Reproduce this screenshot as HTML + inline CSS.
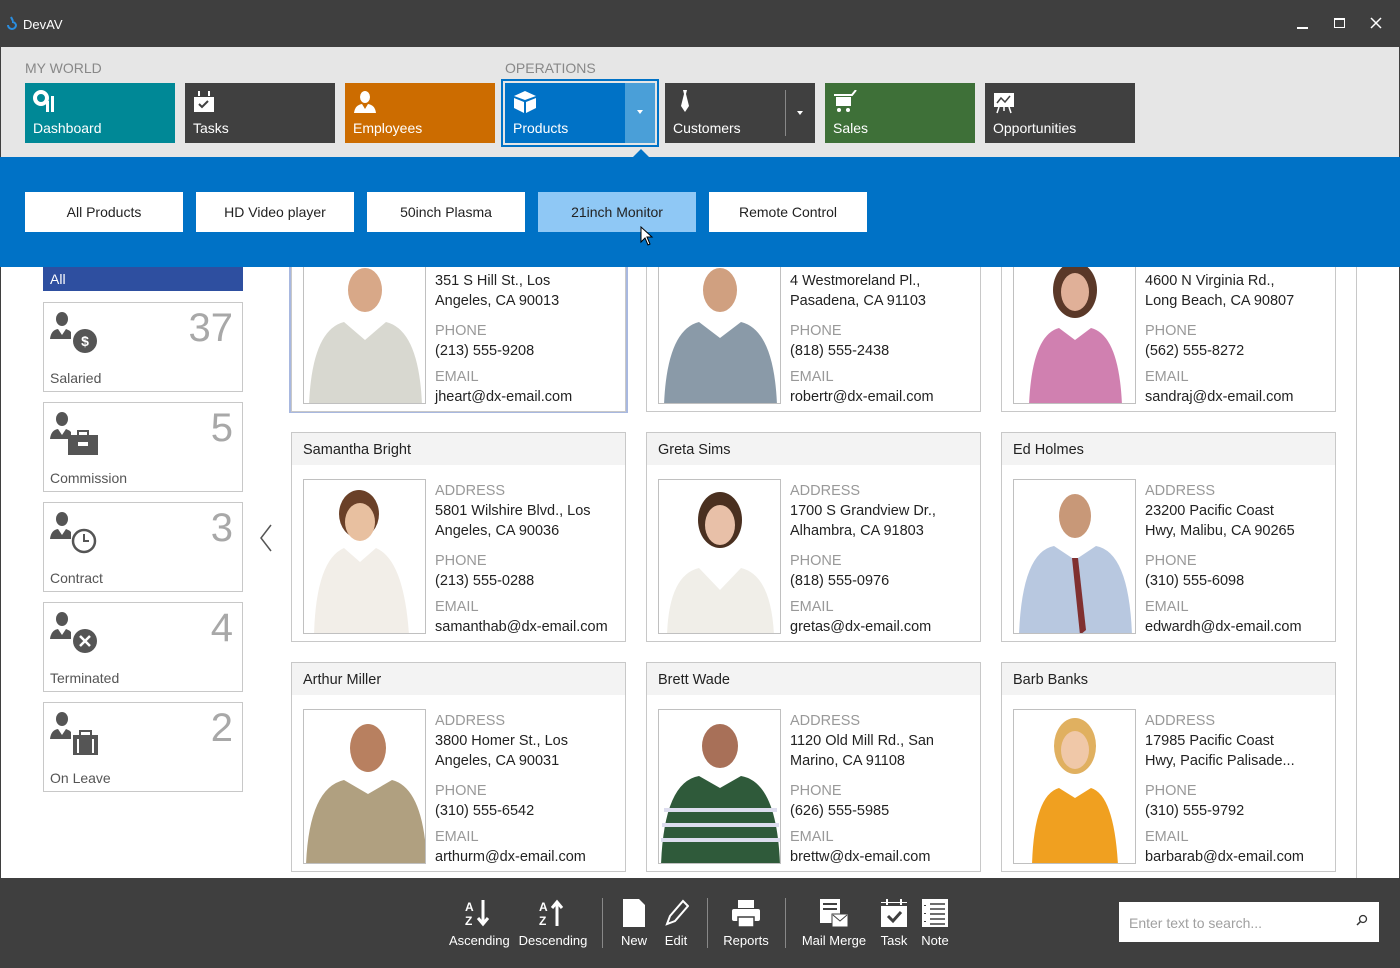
<!DOCTYPE html>
<html><head><meta charset="utf-8"><style>
*{box-sizing:border-box;margin:0;padding:0}
body{width:1400px;height:968px;overflow:hidden;background:#fff;font-family:"Liberation Sans",sans-serif;position:relative}
.a{position:absolute}
.tile{position:absolute;top:83px;height:60px;width:150px;color:#fff;font-size:14px}
.tile .l{position:absolute;left:8px;top:37px}
.tile svg{position:absolute;left:8px;top:7px}
.sub{position:absolute;top:192px;height:40px;width:158px;background:#fff;color:#222;font-size:14px;text-align:center;line-height:41px}
.side{position:absolute;left:43px;width:200px;height:90px;border:1px solid #c8c8c8;background:#fff}
.side .n{position:absolute;right:9px;top:3px;font-size:40px;color:#a8a8a8}
.side .t{position:absolute;left:6px;top:67px;font-size:14px;color:#555}
.side svg{position:absolute;left:5px;top:8px}
.card{position:absolute;width:335px;height:210px;border:1px solid #c8c8c8;background:#fff}
.card .h{height:32px;background:#f3f3f3;padding-left:11px;line-height:34px;font-size:14.5px;color:#222}
.card .p{position:absolute;left:11px;top:46px;width:123px;height:155px;border:1px solid #c0c0c0;overflow:hidden;background:#fff}
.card .i{position:absolute;left:143px;top:48px;font-size:14.5px;line-height:20px;color:#222}
.card .i .g{color:#999}
.card .i .s{height:10px}
.bt{position:absolute;top:898px;color:#fff;font-size:13px;text-align:center}
.bt svg{display:block;margin:0 auto 5px}
.sep{position:absolute;top:898px;width:1px;height:50px;background:#888}
</style></head><body>
<div class="a" style="left:0;top:0;width:1400px;height:47px;background:#3f3f3f"></div>
<svg class="a" style="left:4px;top:16px" width="14" height="16"><path d="M7 1 L9 5 M4 9 a4 4 0 1 0 8 0 a4 4 0 0 0 -4 -3" stroke="#2a8ee0" stroke-width="2" fill="none"/></svg>
<div class="a" style="left:23px;top:17px;color:#fff;font-size:13px">DevAV</div>
<div class="a" style="left:1297px;top:27px;width:11px;height:1.5px;background:#fff"></div>
<div class="a" style="left:1334px;top:18px;width:11px;height:10px;border:1.5px solid #fff;border-top-width:2.5px"></div>
<svg class="a" style="left:1370px;top:17px" width="12" height="12"><path d="M1 1L11 11M11 1L1 11" stroke="#fff" stroke-width="1.5"/></svg>
<div class="a" style="left:0;top:47px;width:1400px;height:110px;background:#e6e6e6;border-left:1px solid #3f3f3f;border-right:1px solid #3f3f3f"></div>
<div class="a" style="left:25px;top:60px;font-size:14px;color:#888">MY WORLD</div>
<div class="a" style="left:505px;top:60px;font-size:14px;color:#888">OPERATIONS</div>
<div class="tile" style="left:25px;background:#008896"><svg width="26" height="24"><circle cx="8" cy="8" r="6" fill="none" stroke="#fff" stroke-width="4"/><rect x="13" y="11" width="3" height="11" fill="#fff"/><rect x="18" y="6" width="3" height="16" fill="#fff"/></svg><span class="l">Dashboard</span></div>
<div class="tile" style="left:185px;background:#404040"><svg width="24" height="24"><rect x="1" y="4" width="20" height="18" fill="#fff"/><rect x="1" y="4" width="20" height="3" fill="#404040"/><path d="M6 14l3 3 6-6" stroke="#404040" stroke-width="2" fill="none"/><rect x="5" y="1" width="2" height="5" fill="#fff"/><rect x="15" y="1" width="2" height="5" fill="#fff"/></svg><span class="l">Tasks</span></div>
<div class="tile" style="left:345px;background:#cc6c00"><svg width="24" height="24"><ellipse cx="12" cy="7" rx="5" ry="6" fill="#fff"/><path d="M1 23 Q2 15 9 14 L12 19 L15 14 Q22 15 23 23Z" fill="#fff"/></svg><span class="l">Employees</span></div>
<div class="a" style="left:501px;top:79px;width:158px;height:68px;border:2px solid #0072c6"></div>
<div class="tile" style="left:505px;width:150px;background:#0072c6"><svg width="24" height="24"><path d="M12 1L23 6L12 10L1 6Z M1 8L11 12V23L1 18Z M13 12L23 8V18L13 23Z" fill="#fff"/></svg><span class="l">Products</span><div class="a" style="left:120px;top:0;width:30px;height:60px;background:#4a9fd8"></div><div class="a" style="left:132px;top:27px;border:3px solid transparent;border-top:4px solid #fff"></div></div>
<div class="tile" style="left:665px;background:#404040"><svg width="24" height="24"><path d="M10 0h4l-1 4 3 12-4 6-4-6 3-12z" fill="#fff"/></svg><span class="l">Customers</span><div class="a" style="left:120px;top:7px;width:1px;height:46px;background:#888"></div><div class="a" style="left:132px;top:28px;border:3px solid transparent;border-top:4px solid #fff"></div></div>
<div class="tile" style="left:825px;background:#3e7038"><svg width="26" height="24"><path d="M1 5h18l4-5" stroke="#fff" stroke-width="2" fill="none"/><rect x="3" y="7" width="15" height="9" fill="#fff"/><circle cx="6" cy="20" r="2" fill="#fff"/><circle cx="15" cy="20" r="2" fill="#fff"/></svg><span class="l">Sales</span></div>
<div class="tile" style="left:985px;background:#404040"><svg width="24" height="24"><rect x="1" y="3" width="20" height="14" fill="#fff"/><path d="M4 13l4-5 4 4 5-6" stroke="#404040" stroke-width="1.5" fill="none"/><path d="M6 17l-2 6M16 17l2 6M11 17v4" stroke="#fff" stroke-width="1.5"/></svg><span class="l">Opportunities</span></div>
<div class="a" style="left:633px;top:149px;border:8px solid transparent;border-bottom:8px solid #0072c6;border-top:0"></div>
<div class="a" style="left:0;top:157px;width:1400px;height:110px;background:#0072c6"></div>
<div class="sub" style="left:25px">All Products</div>
<div class="sub" style="left:196px">HD Video player</div>
<div class="sub" style="left:367px">50inch Plasma</div>
<div class="sub" style="left:538px;background:#8fc8f5">21inch Monitor</div>
<div class="sub" style="left:709px">Remote Control</div>
<svg class="a" style="left:640px;top:226px" width="14" height="20"><path d="M1 1V16L5 12L8 19L10 18L7 11H12Z" fill="#fff" stroke="#000" stroke-width="1"/></svg>
<div class="a" style="left:0;top:267px;width:1px;height:611px;background:#3f3f3f"></div>
<div class="a" style="left:1399px;top:267px;width:1px;height:611px;background:#3f3f3f"></div>
<div class="a" style="left:43px;top:267px;width:200px;height:24px;background:#2e4fa0;color:#fff;font-size:14px;padding:4px 7px">All</div>
<div class="side" style="top:302px"><svg width="52" height="46"><ellipse cx="13" cy="8" rx="6" ry="7" fill="#555"/><path d="M1 28Q2 19 9 18L13 24L17 18Q20 19 22 21V28Z" fill="#555"/><circle cx="36" cy="30" r="12" fill="#555"/><text x="36" y="35" fill="#fff" font-size="14" font-weight="bold" text-anchor="middle" font-family="Liberation Sans">$</text></svg><span class="n">37</span><span class="t">Salaried</span></div>
<div class="side" style="top:402px"><svg width="52" height="46"><ellipse cx="13" cy="8" rx="6" ry="7" fill="#555"/><path d="M1 28Q2 19 9 18L13 24L17 18Q20 19 22 21V28Z" fill="#555"/><rect x="19" y="24" width="30" height="20" fill="#555"/><rect x="29" y="20" width="10" height="5" fill="none" stroke="#555" stroke-width="2"/><rect x="29" y="31" width="10" height="4" fill="#fff"/></svg><span class="n">5</span><span class="t">Commission</span></div>
<div class="side" style="top:502px"><svg width="52" height="46"><ellipse cx="13" cy="8" rx="6" ry="7" fill="#555"/><path d="M1 28Q2 19 9 18L13 24L17 18Q20 19 22 21V28Z" fill="#555"/><circle cx="35" cy="30" r="11" fill="#fff" stroke="#555" stroke-width="2.5"/><path d="M35 23v7h5" stroke="#555" stroke-width="2" fill="none"/></svg><span class="n">3</span><span class="t">Contract</span></div>
<div class="side" style="top:602px"><svg width="52" height="46"><ellipse cx="13" cy="8" rx="6" ry="7" fill="#555"/><path d="M1 28Q2 19 9 18L13 24L17 18Q20 19 22 21V28Z" fill="#555"/><circle cx="36" cy="30" r="12" fill="#555"/><path d="M31 25l10 10M41 25l-10 10" stroke="#fff" stroke-width="2.5"/></svg><span class="n">4</span><span class="t">Terminated</span></div>
<div class="side" style="top:702px"><svg width="52" height="46"><ellipse cx="13" cy="8" rx="6" ry="7" fill="#555"/><path d="M1 28Q2 19 9 18L13 24L17 18Q20 19 22 21V28Z" fill="#555"/><rect x="24" y="24" width="25" height="20" fill="#555"/><rect x="31" y="20" width="11" height="5" fill="none" stroke="#555" stroke-width="2"/><rect x="28" y="28" width="2" height="14" fill="#fff"/><rect x="43" y="28" width="2" height="14" fill="#fff"/></svg><span class="n">2</span><span class="t">On Leave</span></div>
<svg class="a" style="left:259px;top:524px" width="14" height="28"><path d="M12 1L2 14L12 27" stroke="#555" stroke-width="1.5" fill="none"/></svg>

<div class="a" style="left:250px;top:267px;width:1150px;height:611px;overflow:hidden">
<div class="a" style="left:39px;top:-5px;width:339px;height:151px;border:2px solid #a8b8e0"></div>
<div class="a" style="left:1106px;top:0;width:1px;height:611px;background:#c8c8c8"></div>
<div class="card" style="left:41px;top:-65px"><div class="h">John Heart</div><div class="p"><svg width="123" height="155"><ellipse cx="61" cy="40" rx="17" ry="22" fill="#d8a888"/><path d="M5 155Q8 80 40 72L61 90L82 72Q115 80 118 155Z" fill="#d8d8d0"/></svg></div><div class="i"><div class="g">ADDRESS</div>351 S Hill St., Los<br>Angeles, CA 90013<div class="s"></div><div class="g">PHONE</div>(213) 555-9208<div class="s" style="height:6px"></div><div class="g">EMAIL</div>jheart@dx-email.com</div></div>
<div class="card" style="left:396px;top:-65px"><div class="h">Robert Reagan</div><div class="p"><svg width="123" height="155"><ellipse cx="61" cy="40" rx="17" ry="22" fill="#d0a080"/><path d="M5 155Q8 80 40 72L61 88L82 72Q115 80 118 155Z" fill="#8a9aa8"/></svg></div><div class="i"><div class="g">ADDRESS</div>4 Westmoreland Pl.,<br>Pasadena, CA 91103<div class="s"></div><div class="g">PHONE</div>(818) 555-2438<div class="s" style="height:6px"></div><div class="g">EMAIL</div>robertr@dx-email.com</div></div>
<div class="card" style="left:751px;top:-65px"><div class="h">Sandra Johnson</div><div class="p"><svg width="123" height="155"><ellipse cx="61" cy="40" rx="22" ry="28" fill="#5a3828"/><ellipse cx="61" cy="42" rx="14" ry="19" fill="#e0b098"/><path d="M15 155Q18 85 45 78L61 90L77 78Q105 85 108 155Z" fill="#d080b0"/></svg></div><div class="i"><div class="g">ADDRESS</div>4600 N Virginia Rd.,<br>Long Beach, CA 90807<div class="s"></div><div class="g">PHONE</div>(562) 555-8272<div class="s" style="height:6px"></div><div class="g">EMAIL</div>sandraj@dx-email.com</div></div>

<div class="card" style="left:41px;top:165px"><div class="h">Samantha Bright</div><div class="p"><svg width="123" height="155"><ellipse cx="55" cy="34" rx="20" ry="24" fill="#6a4028"/><ellipse cx="56" cy="42" rx="15" ry="19" fill="#e8c0a0"/><path d="M10 155Q12 80 40 68L56 82L72 68Q100 80 105 155Z" fill="#f2eee8"/></svg></div><div class="i"><div class="g">ADDRESS</div>5801 Wilshire Blvd., Los<br>Angeles, CA 90036<div class="s"></div><div class="g">PHONE</div>(213) 555-0288<div class="s" style="height:6px"></div><div class="g">EMAIL</div>samanthab@dx-email.com</div></div>
<div class="card" style="left:396px;top:165px"><div class="h">Greta Sims</div><div class="p"><svg width="123" height="155"><ellipse cx="61" cy="40" rx="22" ry="28" fill="#4a3020"/><ellipse cx="61" cy="45" rx="15" ry="20" fill="#e8c0a8"/><path d="M8 155Q10 95 40 88L61 110L82 88Q112 95 115 155Z" fill="#f0eee8"/></svg></div><div class="i"><div class="g">ADDRESS</div>1700 S Grandview Dr.,<br>Alhambra, CA 91803<div class="s"></div><div class="g">PHONE</div>(818) 555-0976<div class="s" style="height:6px"></div><div class="g">EMAIL</div>gretas@dx-email.com</div></div>
<div class="card" style="left:751px;top:165px"><div class="h">Ed Holmes</div><div class="p"><svg width="123" height="155"><ellipse cx="61" cy="36" rx="16" ry="22" fill="#c89878"/><path d="M5 155Q8 72 40 66L61 80L82 66Q115 72 118 155Z" fill="#b8c8e0"/><path d="M58 78L64 78L72 150L66 155Z" fill="#803030"/></svg></div><div class="i"><div class="g">ADDRESS</div>23200 Pacific Coast<br>Hwy, Malibu, CA 90265<div class="s"></div><div class="g">PHONE</div>(310) 555-6098<div class="s" style="height:6px"></div><div class="g">EMAIL</div>edwardh@dx-email.com</div></div>

<div class="card" style="left:41px;top:395px"><div class="h">Arthur Miller</div><div class="p"><svg width="123" height="155"><ellipse cx="64" cy="38" rx="18" ry="24" fill="#b88060"/><path d="M2 155Q5 78 40 70L64 84L88 70Q120 78 123 155Z" fill="#b0a080"/></svg></div><div class="i"><div class="g">ADDRESS</div>3800 Homer St., Los<br>Angeles, CA 90031<div class="s"></div><div class="g">PHONE</div>(310) 555-6542<div class="s" style="height:6px"></div><div class="g">EMAIL</div>arthurm@dx-email.com</div></div>
<div class="card" style="left:396px;top:395px"><div class="h">Brett Wade</div><div class="p"><svg width="123" height="155"><ellipse cx="61" cy="36" rx="18" ry="22" fill="#a87058"/><path d="M2 155Q5 72 40 66L61 78L82 66Q118 72 121 155Z" fill="#2f5a3a"/><path d="M5 100H118M3 115H120M2 130H121" stroke="#dde" stroke-width="4"/></svg></div><div class="i"><div class="g">ADDRESS</div>1120 Old Mill Rd., San<br>Marino, CA 91108<div class="s"></div><div class="g">PHONE</div>(626) 555-5985<div class="s" style="height:6px"></div><div class="g">EMAIL</div>brettw@dx-email.com</div></div>
<div class="card" style="left:751px;top:395px"><div class="h">Barb Banks</div><div class="p"><svg width="123" height="155"><ellipse cx="61" cy="36" rx="21" ry="28" fill="#e0b060"/><ellipse cx="61" cy="40" rx="14" ry="19" fill="#f0c8a8"/><path d="M18 155Q20 85 45 78L61 88L77 78Q100 85 104 155Z" fill="#f0a020"/></svg></div><div class="i"><div class="g">ADDRESS</div>17985 Pacific Coast<br>Hwy, Pacific Palisade...<div class="s"></div><div class="g">PHONE</div>(310) 555-9792<div class="s" style="height:6px"></div><div class="g">EMAIL</div>barbarab@dx-email.com</div></div>
</div>

<div class="a" style="left:0;top:878px;width:1400px;height:90px;background:#3f3f3f"></div>
<div class="bt" style="left:449px;width:60px"><svg width="30" height="30"><text x="1" y="13" fill="#fff" font-size="12" font-weight="bold" font-family="Liberation Sans">A</text><text x="1" y="27" fill="#fff" font-size="12" font-weight="bold" font-family="Liberation Sans">Z</text><path d="M19 2V26M14 20l5 6 5-6" stroke="#fff" stroke-width="3" fill="none"/></svg>Ascending</div>
<div class="bt" style="left:518px;width:70px"><svg width="30" height="30"><text x="1" y="13" fill="#fff" font-size="12" font-weight="bold" font-family="Liberation Sans">A</text><text x="1" y="27" fill="#fff" font-size="12" font-weight="bold" font-family="Liberation Sans">Z</text><path d="M19 28V4M14 10l5-6 5 6" stroke="#fff" stroke-width="3" fill="none"/></svg>Descending</div>
<div class="sep" style="left:602px"></div>
<div class="bt" style="left:618px;width:32px"><svg width="26" height="30"><path d="M2 1H18L24 7V29H2Z" fill="#fff"/></svg>New</div>
<div class="bt" style="left:660px;width:32px"><svg width="26" height="30"><path d="M4 26L7 18L20 3L25 8L12 23Z" fill="none" stroke="#fff" stroke-width="2"/></svg>Edit</div>
<div class="sep" style="left:707px"></div>
<div class="bt" style="left:720px;width:52px"><svg width="30" height="30"><rect x="7" y="2" width="16" height="8" fill="#fff"/><rect x="1" y="11" width="28" height="12" rx="2" fill="#fff"/><rect x="7" y="19" width="16" height="10" fill="#fff" stroke="#3f3f3f" stroke-width="1.5"/></svg>Reports</div>
<div class="sep" style="left:785px"></div>
<div class="bt" style="left:798px;width:72px"><svg width="30" height="30"><rect x="1" y="1" width="20" height="24" fill="#fff"/><path d="M4 6h14M4 11h14" stroke="#3f3f3f" stroke-width="2"/><rect x="13" y="16" width="16" height="13" fill="#fff" stroke="#3f3f3f"/><path d="M14 17l7 6 7-6" stroke="#3f3f3f" fill="none"/></svg>Mail Merge</div>
<div class="bt" style="left:878px;width:32px"><svg width="28" height="30"><rect x="1" y="4" width="26" height="25" fill="#fff"/><rect x="1" y="5" width="26" height="3" fill="#3f3f3f"/><rect x="6" y="1" width="2" height="6" fill="#fff"/><rect x="20" y="1" width="2" height="6" fill="#fff"/><path d="M8 18l5 5 8-9" stroke="#3f3f3f" stroke-width="3" fill="none"/></svg>Task</div>
<div class="bt" style="left:918px;width:34px"><svg width="28" height="30"><rect x="1" y="1" width="26" height="28" fill="#fff"/><path d="M9 6h15M9 11h15M9 16h15M9 21h15M9 26h15" stroke="#3f3f3f" stroke-width="1.5"/><path d="M4 7v1M4 15v1M4 23v1" stroke="#3f3f3f" stroke-width="2"/></svg>Note</div>
<div class="a" style="left:1119px;top:902px;width:260px;height:40px;background:#fff;font-size:14px;color:#a0a0a0;padding:13px 10px">Enter text to search...</div>
<svg class="a" style="left:1356px;top:914px" width="12" height="12"><circle cx="7" cy="5" r="3.5" fill="none" stroke="#333" stroke-width="1.3"/><path d="M4.5 7.5L1 11" stroke="#333" stroke-width="1.5"/></svg>
</body></html>
